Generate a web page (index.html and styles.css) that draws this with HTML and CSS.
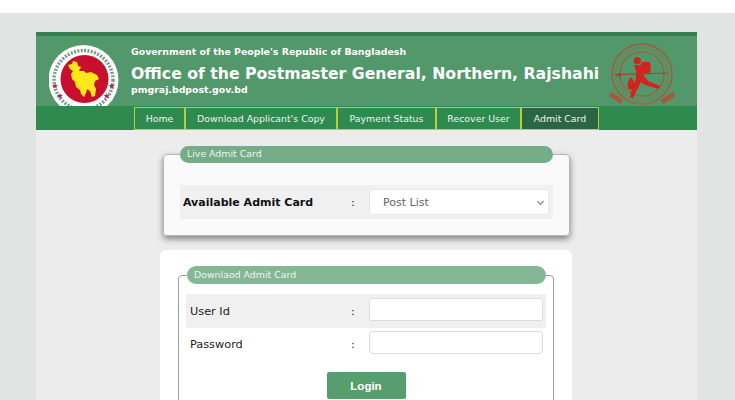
FILE: index.html
```html
<!DOCTYPE html>
<html lang="en">
<head>
  <meta charset="UTF-8" />
  <title>Office of the Postmaster General, Northern, Rajshahi</title>
  <link rel="stylesheet" href="styles.css">
</head>

<body>

  <div class="page">

    <header class="site-header">
      <svg class="logo-left" width="70" height="62" viewBox="0 0 70 62">
        <defs>
          <path id="star" d="M0-3 .8-.9 3-.9 1.200.4 1.900 2.600 0 1.300-1.900 2.600-1.200.4-3-.9-.8-.9Z" fill="#b5234a"/>
        </defs>
        <circle cx="34.5" cy="36" r="35" fill="#fff"/>
        <circle cx="34.5" cy="36" r="29.500" fill="none" stroke="#7d9a88" stroke-width="3.5" stroke-dasharray="2 1.4"/>
        <circle cx="35.5" cy="35" r="24" fill="#c8102e"/>
        <path d="M19 21 23 20 24 17 28 18 29 22 32 23 30 27 35 27 37 29 42 28 48 31 50 35 46 37 45 41 47 45 46 52 43 53 41 47 38 45 37 49 35 53 32 50 31 46 27 43 26 38 23 35 22 30 24 27 21 25Z" fill="#ffe81a"/>
        <use href="#star" x="6" y="42"/>
        <use href="#star" x="62.700" y="42"/>
        <use href="#star" x="11" y="52"/>
        <use href="#star" x="57.700" y="52"/>
      </svg>

      <div class="header-text">
        <p class="gov-line">Government of the People's Republic of Bangladesh</p>
        <h1>Office of the Postmaster General, Northern, Rajshahi</h1>
        <p class="site-url">pmgraj.bdpost.gov.bd</p>
      </div>

      <svg class="logo-right" width="70" height="64" viewBox="0 0 70 64">
        <circle cx="34" cy="32" r="30" fill="none" stroke="#a8573c" stroke-width="1.4"/>
        <circle cx="34" cy="32" r="22" fill="none" stroke="#a8573c" stroke-width="1.2"/>
        <circle cx="34" cy="32" r="26" fill="none" stroke="#9a6a4c" stroke-width="3" stroke-dasharray="2 2" opacity=".6"/>
        <path d="M2 52 14 60M66 52 54 60" stroke="#a8573c" stroke-width="5" fill="none"/>
        <path d="M20 60 Q34 64 48 60" stroke="#8c7a55" stroke-width="3" fill="none" stroke-dasharray="2 1.5"/>
        <circle cx="29.3" cy="18.7" r="3.6" fill="#d3231f"/>
        <rect x="33" y="20" width="9.5" height="11" rx="2" fill="#d3231f"/>
        <path d="M26 23 35 23 36 34 40 39 52 44 51 47 37 43 33 40 29 48 25 56 22 55 24 46 28 37 28 29Z" fill="#d3231f"/>
        <path d="M7 32.7 58.7 31" stroke="#a8402c" stroke-width="1.2"/>
        <path d="M6 32.7 13 30.500V35Z" fill="#a8402c"/>
        <path d="M23 35C26 38 27 42 26 46 24 48 21 48 20 46 19 42 20 38 23 35Z" fill="#d3231f"/>
      </svg>
    </header>

    <nav class="main-nav">
      <a class="nav-link" href="#">Home</a>
      <a class="nav-link link-download" href="#">Download Applicant's Copy</a>
      <a class="nav-link link-payment" href="#">Payment Status</a>
      <a class="nav-link link-recover" href="#">Recover User</a>
      <a class="nav-link link-admit active" href="#">Admit Card</a>
    </nav>

    <main class="content">

      <div class="live-card">
        <fieldset class="live-box">
          <legend class="pill pill-live">Live Admit Card</legend>
          <div class="form-row row-shaded row-live">
            <label class="row-label label-strong">Available Admit Card</label>
            <span class="row-colon">:</span>
            <span class="select-wrap">
              <select class="post-select">
                <option>Post List</option>
              </select>
            </span>
          </div>
        </fieldset>
      </div>

      <div class="download-card">
        <fieldset class="download-box">
          <legend class="pill pill-download">Downlaod Admit Card</legend>
          <div class="form-row row-shaded row-user">
            <label class="row-label">User Id</label>
            <span class="row-colon">:</span>
            <input class="text-input" type="text">
          </div>
          <div class="form-row row-pass">
            <label class="row-label">Password</label>
            <span class="row-colon">:</span>
            <input class="text-input" type="password">
          </div>
          <div class="login-wrap">
            <button class="btn-login">Login</button>
          </div>
        </fieldset>
      </div>

    </main>

  </div>

</body>
</html>
```

FILE: styles.css
```css
html, body {
  height: 400px;
  overflow: hidden;
}

body {
  margin: 0;
  padding: 13px 0 0;
  box-sizing: border-box;
  background-color: #fff;
  font-family: "DejaVu Sans", Verdana, sans-serif;
  color: #222;
}

.page {
  height: 387px;
  padding: 19px 38px 0 36px;
  background-color: #e2e3e3;
  overflow: hidden;
}

/* --- header --- */
.site-header {
  display: flex;
  height: 70px;
  padding: 0 20px 0 13px;
  border-top: 4px solid #377f50;
  background-color: #52986a;
  overflow: hidden;
  align-items: flex-end;
}

.logo-left {
  flex: none;
  display: block;
}

.header-text {
  flex: none;
  width: 472px;
  margin-left: 12px;
  align-self: flex-start;
  padding-top: 9px;
  color: #fff;
}

.gov-line {
  margin: 0;
  font-size: 9.4px;
  line-height: 14px;
  font-weight: bold;
}

.site-header h1 {
  margin: 4px 0 0;
  font-size: 15.7px;
  line-height: 21px;
  font-weight: bold;
  white-space: nowrap;
}

.site-url {
  margin: 0;
  font-size: 9.4px;
  line-height: 12px;
  font-weight: bold;
}

.logo-right {
  flex: none;
  display: block;
  margin-left: 5px;
}

/* --- nav --- */
.main-nav {
  display: flex;
  height: 24px;
  padding-left: 98px;
  background-color: #2f8a4f;
}

.nav-link {
  display: block;
  box-sizing: border-box;
  width: 51px;
  height: 23px;
  margin-top: 1px;
  border: 1px solid #b4d13c;
  font-size: 9.4px;
  line-height: 21px;
  text-align: center;
  text-decoration: none;
  color: #eef4ee;
}

.link-download { width: 152px; }
.link-payment { width: 99px; }
.link-recover { width: 85px; }
.link-admit { width: 78px; }

.nav-link.active {
  background-color: #2a6644;
}

/* --- content --- */
.content {
  height: 270px;
  padding-top: 24px;
  background-color: #ececec;
}

.live-card {
  display: flow-root;
  box-sizing: border-box;
  width: 407px;
  height: 82px;
  margin-left: 127px;
  border-radius: 4px;
  background-color: #fafafa;
  box-shadow: 0 3px 6px rgba(0, 0, 0, 0.45);
}

.live-box {
  height: 90px;
  box-sizing: border-box;
  margin: -8px 0 0;
  padding: 0 16px;
  border: 1px solid #b5b5b5;
  border-radius: 4px;
}

.pill {
  box-sizing: border-box;
  height: 17px;
  padding: 0 7px;
  border-radius: 9px;
  font-size: 9.4px;
  line-height: 16px;
  color: #eef6ef;
}

.pill-live {
  width: 373px;
  background-color: #74ad88;
}

.pill-download {
  width: 359px;
  height: 18px;
  margin-left: 1px;
  line-height: 17px;
  background-color: #83b795;
}

.form-row {
  display: flex;
  align-items: center;
}

.row-shaded {
  background-color: #f0f0f0;
}

.row-live {
  height: 34px;
  margin-top: 22px;
  padding: 0 4px 0 3px;
}

.row-label {
  width: 159px;
  font-size: 11.3px;
}

.label-strong {
  width: 166px;
  font-weight: bold;
  font-size: 11px;
  color: #111;
}

.row-colon {
  box-sizing: border-box;
  width: 20px;
  padding-left: 2px;
  font-size: 11.300px;
}

.select-wrap {
  position: relative;
  flex: none;
  display: block;
}

/* chevron drawn over the select */
.select-wrap::after {
  content: "";
  position: absolute;
  top: 10px;
  right: 6px;
  width: 4px;
  height: 4px;
  border-right: 1px solid #777;
  border-bottom: 1px solid #777;
  transform: rotate(45deg);
}

.post-select {
  display: block;
  appearance: none;
  box-sizing: border-box;
  width: 180px;
  height: 26px;
  padding-left: 13px;
  border: 1px solid #e8e8e8;
  border-radius: 3px;
  background-color: #fff;
  font-family: inherit;
  font-size: 11px;
  color: #666;
}

.download-card {
  box-sizing: border-box;
  width: 412px;
  height: 200px;
  margin: 14px 0 0 124px;
  padding: 16px 19px 0 18px;
  border-radius: 6px;
  background-color: #fff;
}

.download-box {
  height: 140px;
  box-sizing: border-box;
  margin: 0;
  padding: 0 7px;
  border: 1px solid #9c9c9c;
  border-radius: 4px;
}

.row-user,
.row-pass {
  padding-left: 4px;
}

.row-user {
  height: 34px;
  margin-top: 10px;
}

.row-pass {
  height: 32px;
}

.text-input {
  box-sizing: border-box;
  flex: none;
  width: 174px;
  height: 23px;
  margin-bottom: 4px;
  padding: 0 6px;
  border: 1px solid #dcdcdc;
  border-radius: 3px;
  background-color: #fff;
}

.login-wrap {
  display: flex;
  justify-content: center;
  margin-top: 12px;
}

.btn-login {
  width: 79px;
  height: 27px;
  padding: 0;
  border: none;
  border-radius: 2px;
  background-color: #569e6e;
  color: #fff;
  font-family: "Liberation Sans", Arial, sans-serif;
  font-size: 11.5px;
  font-weight: bold;
}
```
